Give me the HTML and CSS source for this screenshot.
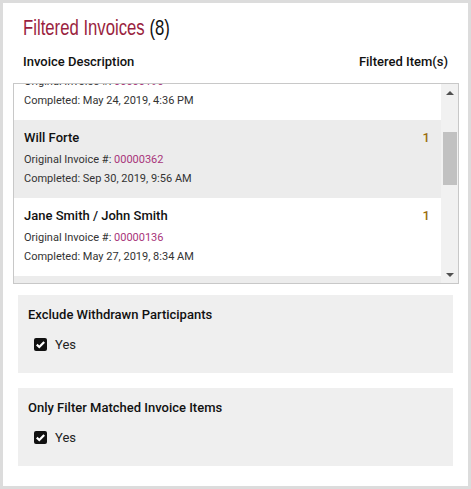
FILE: index.html
```html
<!DOCTYPE html>
<html>
<head>
<meta charset="utf-8">
<link rel="stylesheet" href="styles.css">
</head>
<body>
<div class="card">
  <div class="title-row">
    <h1 class="title"><span class="title-main">Filtered Invoices</span> (8)</h1>
  </div>
  <div class="cols">
    <span>Invoice Description</span>
    <span>Filtered Item(s)</span>
  </div>
  <div class="listbox">
    <div class="viewport">
      <div class="items">
        <div class="item">
          <div class="item-text">
            <div class="name">Jane Smith</div>
            <div class="line">Original Invoice #: <span class="num">00000196</span></div>
            <div class="line">Completed: May 24, 2019, 4:36 PM</div>
          </div>
          <div class="count">1</div>
        </div>
        <div class="item alt">
          <div class="item-text">
            <div class="name">Will Forte</div>
            <div class="line">Original Invoice #: <span class="num">00000362</span></div>
            <div class="line">Completed: Sep 30, 2019, 9:56 AM</div>
          </div>
          <div class="count">1</div>
        </div>
        <div class="item">
          <div class="item-text">
            <div class="name">Jane Smith / John Smith</div>
            <div class="line">Original Invoice #: <span class="num">00000136</span></div>
            <div class="line">Completed: May 27, 2019, 8:34 AM</div>
          </div>
          <div class="count">1</div>
        </div>
        <div class="item alt">
          <div class="item-text">
            <div class="name">John Smith</div>
            <div class="line">Original Invoice #: <span class="num">00000101</span></div>
            <div class="line">Completed: May 20, 2019, 1:12 PM</div>
          </div>
          <div class="count">1</div>
        </div>
      </div>
    </div>
    <div class="scrollbar">
      <div class="arrow up"></div>
      <div class="track"><div class="thumb"></div></div>
      <div class="arrow down"></div>
    </div>
  </div>
  <div class="panel">
    <div class="panel-label">Exclude Withdrawn Participants</div>
    <label class="check-row"><span class="checkbox"><svg viewBox="0 0 13 13" width="13" height="13"><path d="M2.8 6.6 L5.3 9 L10.2 3.9" fill="none" stroke="#fff" stroke-width="2.2"/></svg></span>Yes</label>
  </div>
  <div class="panel">
    <div class="panel-label">Only Filter Matched Invoice Items</div>
    <label class="check-row"><span class="checkbox"><svg viewBox="0 0 13 13" width="13" height="13"><path d="M2.8 6.6 L5.3 9 L10.2 3.9" fill="none" stroke="#fff" stroke-width="2.2"/></svg></span>Yes</label>
  </div>
</div>
</body>
</html>
```

FILE: styles.css
```css
html, body {
  margin: 0;
  padding: 0;
}
body {
  background: #dcdcdc;
  padding: 3px;
  font-family: Roboto, "Liberation Sans", sans-serif;
  color: #222;
}
.card {
  background: #fff;
  width: 465px;
  height: 483px;
  box-sizing: border-box;
  padding: 0 9px 0 10px;
}
.title-row {
  padding: 10px 0 0 10px;
  height: 30px;
}
.title {
  display: inline-block;
  margin: 0;
  font-family: "Liberation Sans", Arial, sans-serif;
  font-weight: normal;
  font-size: 22px;
  line-height: 30px;
  color: #111;
  white-space: nowrap;
  transform: scaleX(0.76);
  transform-origin: left center;
}
.title-main {
  color: #9a1f40;
}
.cols {
  display: flex;
  justify-content: space-between;
  padding: 10px 11px 12px 10px;
  font-size: 13px;
  font-weight: 500;
  line-height: 18px;
  color: #111;
}
.listbox {
  display: flex;
  border: 1px solid #c8c8c8;
  height: 201px;
  width: 446px;
  box-sizing: border-box;
}
.viewport {
  flex: 1;
  overflow: hidden;
}
.items {
  margin-top: -42px;
}
.item {
  display: flex;
  justify-content: space-between;
  padding: 9px 11px 11px 10px;
  height: 58px;
  background: #fff;
}
.item.alt {
  background: #ececec;
}
.name {
  font-size: 13px;
  font-weight: 500;
  line-height: 18px;
  margin-bottom: 3px;
  color: #111;
}
.line {
  font-size: 11px;
  line-height: 19px;
  color: #333;
}
.num {
  color: #a8357a;
}
.count {
  font-size: 13px;
  font-weight: 500;
  line-height: 18px;
  color: #9a6d10;
}
.scrollbar {
  width: 17px;
  background: #f1f1f1;
  display: flex;
  flex-direction: column;
}
.arrow {
  height: 17px;
  display: flex;
  align-items: center;
  justify-content: center;
}
.arrow::before {
  content: "";
  width: 0;
  height: 0;
  border-left: 4px solid transparent;
  border-right: 4px solid transparent;
}
.arrow.up::before {
  border-bottom: 4px solid #505050;
}
.arrow.down::before {
  border-top: 4px solid #505050;
}
.track {
  flex: 1;
  padding: 31px 1px 0 2px;
}
.thumb {
  height: 53px;
  background: #c1c1c1;
}
.panel {
  background: #efefef;
  margin: 11px 5px 0 5px;
  width: 435px;
  height: 78px;
  box-sizing: border-box;
  padding: 11px 10px 0 10px;
}
.panel + .panel {
  margin-top: 15px;
}
.panel-label {
  font-size: 13px;
  font-weight: 500;
  line-height: 18px;
  color: #111;
}
.check-row {
  display: flex;
  align-items: center;
  height: 20px;
  margin-top: 10px;
  padding-left: 6px;
  font-size: 13px;
  color: #222;
}
.checkbox {
  width: 13px;
  height: 13px;
  background: #111;
  border-radius: 2px;
  margin-right: 8px;
  display: flex;
}
```
